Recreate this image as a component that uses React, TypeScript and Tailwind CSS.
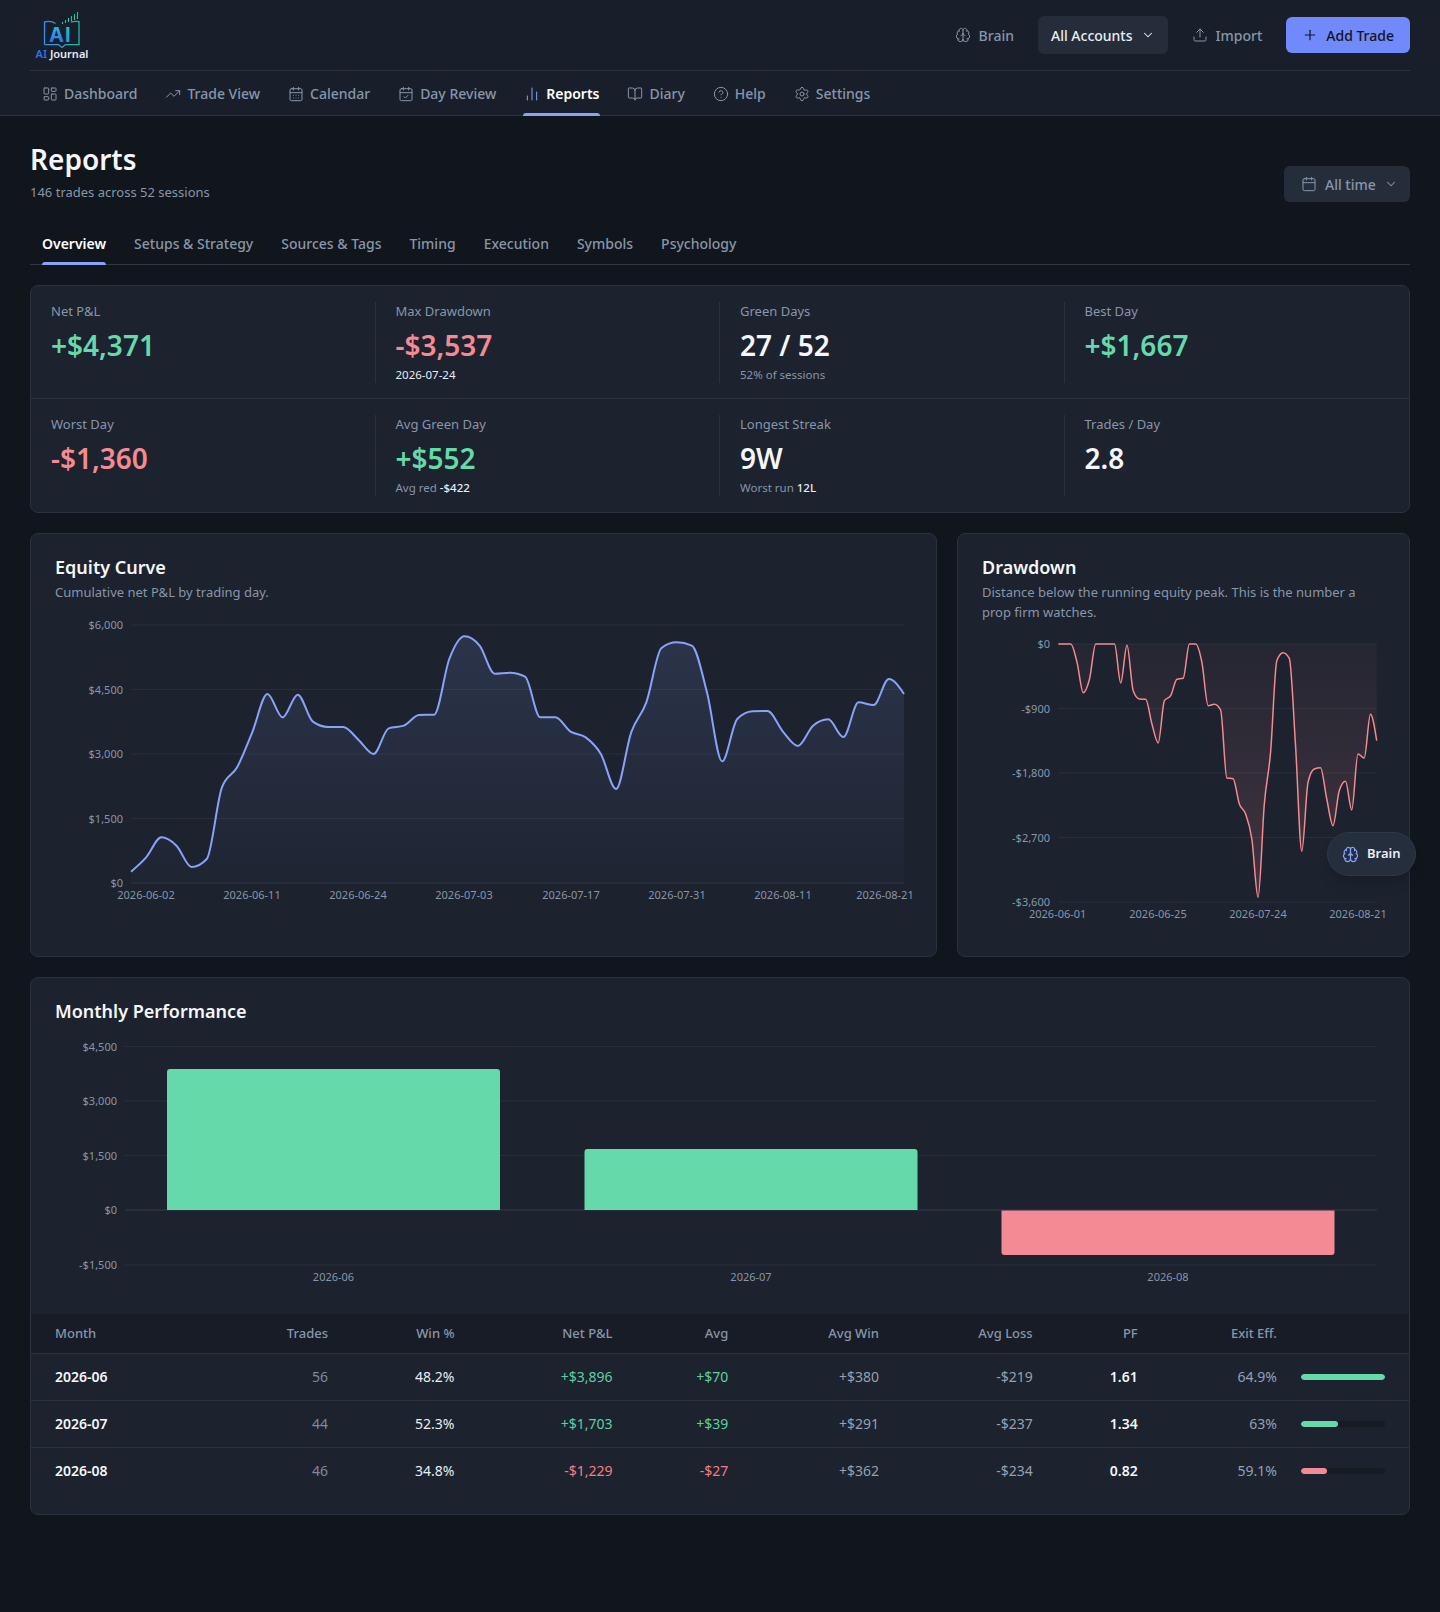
import React from "react";
import {
  LayoutDashboard, TrendingUp, CalendarDays, CalendarCheck, ChartNoAxesColumn, BookOpen,
  CircleHelp, Settings, Brain, Upload, Plus, ChevronDown, Calendar,
} from "lucide-react";

type P = [number, number];

function monotone(pts: P[]): string {
  const n = pts.length;
  const sign = (v: number) => (v < 0 ? -1 : 1);
  const t: number[] = new Array(n).fill(0);
  for (let i = 1; i < n - 1; i++) {
    const h0 = pts[i][0] - pts[i - 1][0];
    const h1 = pts[i + 1][0] - pts[i][0];
    const s0 = (pts[i][1] - pts[i - 1][1]) / h0;
    const s1 = (pts[i + 1][1] - pts[i][1]) / h1;
    const p = (s0 * h1 + s1 * h0) / (h0 + h1);
    t[i] = (sign(s0) + sign(s1)) * Math.min(Math.abs(s0), Math.abs(s1), 0.5 * Math.abs(p)) || 0;
  }
  const ends = (a: number, b: number) => {
    const h = pts[b][0] - pts[a][0];
    return (pts[b][1] - pts[a][1]) / h;
  };
  t[0] = (3 * ends(0, 1) - t[1]) / 2;
  t[n - 1] = (3 * ends(n - 2, n - 1) - t[n - 2]) / 2;
  let d = `M${pts[0][0]},${pts[0][1]}`;
  for (let i = 0; i < n - 1; i++) {
    const h = (pts[i + 1][0] - pts[i][0]) / 3;
    d += `C${pts[i][0] + h},${pts[i][1] + h * t[i]},${pts[i + 1][0] - h},${pts[i + 1][1] - h * t[i + 1]},${pts[i + 1][0]},${pts[i + 1][1]}`;
  }
  return d;
}

const eqY = [1028,985,925,950,1014,990,775,715,610,495,565,497,578,594,594,632,675,598,590,558,557,390,322,350,434,431,443,565,565,608,625,675,780,610,520,357,340,350,490,697,570,547,546,607,651,590,571,624,520,528,450,495];
const ddY = [345,345,345,400,491,450,345,345,345,345,462,349,485,510,511,585,642,515,500,451,448,345,345,400,530,526,543,747,749,825,855,930,1105,825,670,395,371,388,650,967,760,720,716,810,890,785,757,843,675,687,556,635];

const nav = [
  { label: "Dashboard", Icon: LayoutDashboard },
  { label: "Trade View", Icon: TrendingUp },
  { label: "Calendar", Icon: CalendarDays },
  { label: "Day Review", Icon: CalendarCheck },
  { label: "Reports", Icon: ChartNoAxesColumn, active: true },
  { label: "Diary", Icon: BookOpen },
  { label: "Help", Icon: CircleHelp },
  { label: "Settings", Icon: Settings },
];
const tabs = ["Overview", "Setups & Strategy", "Sources & Tags", "Timing", "Execution", "Symbols", "Psychology"];

function Stat({ label, value, tone, sub, last }: { label: string; value: string; tone: string; sub?: React.ReactNode; last?: boolean }) {
  return (
    <div className={last ? "pl-5" : "pl-5 border-r border-[#2a3240]"}>
      <div className="text-[13px] leading-[18px] text-[#8796aa]">{label}</div>
      <div className={`mt-[7px] h-9 text-[28px] leading-9 font-semibold ${tone}`}>{value}</div>
      <div className="mt-1 h-4 text-[11.5px] leading-4 text-[#8796aa]">{sub}</div>
    </div>
  );
}

function Logo() {
  return (
    <div className="flex flex-col items-center w-[56px]">
      <svg width="42" height="38" viewBox="0 0 42 38" className="block">
        <defs>
          <linearGradient id="lg1" x1="0" y1="0" x2="1" y2="0">
            <stop offset="0" stopColor="#2f8ff0" />
            <stop offset="1" stopColor="#17b8a6" />
          </linearGradient>
          <linearGradient id="lg2" x1="0" y1="0" x2="0" y2="1">
            <stop offset="0" stopColor="#22c8e0" />
            <stop offset="1" stopColor="#3b5cf0" />
          </linearGradient>
          <linearGradient id="lg3" x1="0" y1="0" x2="0" y2="1">
            <stop offset="0" stopColor="#1fd0b0" />
            <stop offset="1" stopColor="#1d8ee8" />
          </linearGradient>
        </defs>
        <path d="M3.5 33.5V11c4-1 8-.6 11 1.5M30 11c3-.8 5-.8 8-.4v23H24.5L21 36.500l-3.500-2.900H3.500" fill="none" stroke="url(#lg1)" strokeWidth="1.300" />
        <text x="8" y="31" fontSize="20" fontWeight="700" fill="url(#lg2)" fontFamily="Inter, sans-serif">A</text>
        <text x="24" y="31" fontSize="20" fontWeight="700" fill="url(#lg3)" fontFamily="Inter, sans-serif">I</text>
        <g stroke="#17c9a8" strokeWidth="1.100">
          <path d="M21.500 11v2M24.500 9v3M27.500 7v4M30.500 5v5M33.500 3v6M36.500 1v7" />
        </g>
      </svg>
      <div className="text-[11px] leading-[12px] font-semibold whitespace-nowrap mt-[-1px]">
        <span className="text-[#2f6ff0]">AI</span> <span className="text-[#e6ebf2]">Journal</span>
      </div>
    </div>
  );
}

function EquityChart() {
  const X0 = 55, Y0 = 612;
  const pts: P[] = eqY.map((y, i) => [131 + (i * 773) / 51, 530 + y / 3]);
  const line = monotone(pts);
  const ticks: [string, number][] = [["$6,000", 626], ["$4,500", 690.5], ["$3,000", 755], ["$1,500", 819.500], ["$0", 884]];
  const xt: [string, number][] = [["2026-06-02", 146], ["2026-06-11", 252], ["2026-06-24", 358], ["2026-07-03", 464], ["2026-07-17", 571], ["2026-07-31", 677], ["2026-08-11", 783], ["2026-08-21", 885]];
  return (
    <svg width="857" height="321" viewBox={`${X0} ${Y0} 857 321`} className="block mt-[9px] overflow-visible">
      <defs>
        <linearGradient id="eqFill" x1="0" y1="0" x2="0" y2="1">
          <stop offset="0" stopColor="#8aa2f8" stopOpacity="0.14" />
          <stop offset="1" stopColor="#8aa2f8" stopOpacity="0.02" />
        </linearGradient>
      </defs>
      {ticks.map(([t, y]) => (
        <g key={t}>
          <line x1="131" x2="904" y1={y} y2={y} stroke={t === "$0" ? "#2f3745" : "#282f3c"} />
          <text x="123" y={y + 4} textAnchor="end" fontSize="11" fill="#8796aa">{t}</text>
        </g>
      ))}
      <path d={`${line}L904,884L131,884Z`} fill="url(#eqFill)" />
      <path d={line} fill="none" stroke="#8aa2f8" strokeWidth="2" />
      {xt.map(([t, x]) => (
        <text key={t} x={x} y="900" textAnchor="middle" fontSize="11" fill="#8796aa">{t}</text>
      ))}
    </svg>
  );
}

function DrawdownChart() {
  const X0 = 982, Y0 = 632;
  const pts: P[] = ddY.map((y, i) => [1058.3 + (i * 318.4) / 51, 530 + y / 3]);
  const line = monotone(pts);
  const ticks: [string, number][] = [["$0", 645], ["-$900", 709.5], ["-$1,800", 774], ["-$2,700", 838.5], ["-$3,600", 903]];
  const xt: [string, number][] = [["2026-06-01", 1057.7], ["2026-06-25", 1158], ["2026-07-24", 1258], ["2026-08-21", 1358]];
  return (
    <svg width="403" height="301" viewBox={`${X0} ${Y0} 403 301`} className="block mt-[9px] overflow-visible">
      <defs>
        <linearGradient id="ddFill" x1="0" y1="0" x2="0" y2="1">
          <stop offset="0" stopColor="#f58a92" stopOpacity="0.04" />
          <stop offset="1" stopColor="#f58a92" stopOpacity="0.17" />
        </linearGradient>
      </defs>
      {ticks.map(([t, y]) => (
        <g key={t}>
          <line x1="1058.3" x2="1376.7" y1={y} y2={y} stroke="#282f3c" />
          <text x="1050" y={y + 4} textAnchor="end" fontSize="11" fill="#8796aa">{t}</text>
        </g>
      ))}
      <path d={`${line}L1376.7,645L1058.3,645Z`} fill="url(#ddFill)" />
      <path d={line} fill="none" stroke="#f58a92" strokeWidth="1.500" />
      {xt.map(([t, x]) => (
        <text key={t} x={x} y="919" textAnchor="middle" fontSize="11" fill="#8796aa">{t}</text>
      ))}
    </svg>
  );
}

function MonthlyChart() {
  const X0 = 55, Y0 = 1030;
  const ticks: [string, number][] = [["$4,500", 1046.5], ["$3,000", 1101], ["$1,500", 1155.5], ["$0", 1210], ["-$1,500", 1265]];
  const r = 3;
  return (
    <svg width="1330" height="265" viewBox={`${X0} ${Y0} 1330 265`} className="block mt-[6px] ml-6">
      {ticks.map(([t, y]) => (
        <g key={t}>
          <line x1="125" x2="1377" y1={y} y2={y} stroke={t === "$0" ? "#343c4b" : "#282f3c"} />
          <text x="117" y={y + 4} textAnchor="end" fontSize="11" fill="#8796aa">{t}</text>
        </g>
      ))}
      <path d={`M167,1210V${1069 + r}a${r},${r} 0 0 1 ${r},-${r}H${500 - r}a${r},${r} 0 0 1 ${r},${r}V1210Z`} fill="#66d9ab" />
      <path d={`M584.500,1210V${1149 + r}a${r},${r} 0 0 1 ${r},-${r}H${917.5 - r}a${r},${r} 0 0 1 ${r},${r}V1210Z`} fill="#66d9ab" />
      <path d={`M1001.500,1210.500V${1255 - r}a${r},${r} 0 0 0 ${r},${r}H${1334.5 - r}a${r},${r} 0 0 0 ${r},-${r}V1210.500Z`} fill="#f48a94" />
      {[["2026-06", 333.5], ["2026-07", 751], ["2026-08", 1168]].map(([t, x]) => (
        <text key={t as string} x={x as number} y="1281" textAnchor="middle" fontSize="11" fill="#8796aa">{t}</text>
      ))}
    </svg>
  );
}

const rows = [
  { m: "2026-06", t: "56", w: "48.2%", n: "+$3,896", a: "+$70", aw: "+$380", al: "-$219", pf: "1.61", e: "64.9%", bar: 100, pos: true },
  { m: "2026-07", t: "44", w: "52.3%", n: "+$1,703", a: "+$39", aw: "+$291", al: "-$237", pf: "1.34", e: "63%", bar: 44, pos: true },
  { m: "2026-08", t: "46", w: "34.8%", n: "-$1,229", a: "-$27", aw: "+$362", al: "-$234", pf: "0.82", e: "59.1%", bar: 31, pos: false },
];

export default function App() {
  return (
    <div className="relative min-h-[1612px] bg-[#11151c] text-[#e8edf4] [font-family:'Noto_Sans',sans-serif]">
      <header className="bg-[#181f2a] border-b border-[#2a3240] px-[30px] h-[116px]">
        <div className="h-[71px] border-b border-[#2a3240] flex items-center justify-between">
          <div className="pl-1 pt-[1px]"><Logo /></div>
          <div className="flex items-center gap-2">
            <button className="flex items-center gap-2 px-4 h-9 whitespace-nowrap text-[14px] font-medium text-[#8796aa]">
              <Brain size={16} strokeWidth={1.5} />Brain
            </button>
            <button className="flex items-center gap-2 px-[13px] h-[38px] whitespace-nowrap rounded-md bg-[#252d3b] text-[14px] font-medium text-[#e8edf4]">
              All Accounts<ChevronDown size={14} strokeWidth={1.75} />
            </button>
            <button className="flex items-center gap-2 px-4 h-9 whitespace-nowrap text-[14px] font-medium text-[#8796aa]">
              <Upload size={16} strokeWidth={1.5} />Import
            </button>
            <button className="flex items-center gap-2 px-4 h-9 whitespace-nowrap rounded-md bg-[#7089fb] text-[14px] font-medium text-[#10151d]">
              <Plus size={16} strokeWidth={1.75} />Add Trade
            </button>
          </div>
        </div>
        <nav className="flex gap-[26px] pl-[11px] h-[45px]">
          {nav.map(({ label, Icon, active }) => (
            <a key={label} className={`relative flex items-center gap-[6px] px-[1px] text-[14px] font-medium ${active ? "text-white font-semibold" : "text-[#8796aa]"}`}>
              <Icon size={16} strokeWidth={1.5} className={active ? "text-[#8aa2f8]" : ""} />
              {label}
              {active ? <span className="absolute inset-x-0 bottom-0 h-[3px] rounded-t-sm bg-[#8aa2f8]" /> : null}
            </a>
          ))}
        </nav>
      </header>

      <main className="px-[30px]">
        <div className="flex items-end justify-between pt-[25px]">
          <div>
            <h1 className="text-[28px] leading-9 font-semibold text-[#f4f6fa]">Reports</h1>
            <p className="mt-[5px] text-[13px] leading-5 text-[#8796aa]">146 trades across 52 sessions</p>
          </div>
          <button className="flex items-center gap-2 h-9 w-[126px] pl-[17px] whitespace-nowrap rounded-md bg-[#252d3b] text-[14px] font-medium text-[#8796aa]">
            <Calendar size={16} strokeWidth={1.5} />All time<ChevronDown size={14} strokeWidth={1.75} />
          </button>
        </div>

        <div className="mt-5 flex gap-7 pl-3 border-b border-[#2f3745] h-[43px]">
          {tabs.map((t, i) => (
            <a key={t} className={`relative pt-3 text-[14px] leading-5 font-medium ${i === 0 ? "text-white font-semibold" : "text-[#8796aa]"}`}>
              {t}
              {i === 0 ? <span className="absolute inset-x-0 -bottom-px h-[3px] rounded-t-sm bg-[#8aa2f8]" /> : null}
            </a>
          ))}
        </div>

        <section className="mt-5 rounded-lg border border-[#2a3240] bg-[#1c222e]">
          <div className="grid grid-cols-4 pt-4 pb-[15px] border-b border-[#2a3240]">
            <Stat label="Net P&L" value="+$4,371" tone="text-[#66d9ab]" />
            <Stat label="Max Drawdown" value="-$3,537" tone="text-[#f58a92]" sub={<span className="text-[#e8edf4]">2026-07-24</span>} />
            <Stat label="Green Days" value="27 / 52" tone="text-[#f4f6fa]" sub="52% of sessions" />
            <Stat label="Best Day" value="+$1,667" tone="text-[#66d9ab]" last />
          </div>
          <div className="grid grid-cols-4 pt-4 pb-4">
            <Stat label="Worst Day" value="-$1,360" tone="text-[#f58a92]" />
            <Stat label="Avg Green Day" value="+$552" tone="text-[#66d9ab]" sub={<>Avg red <span className="text-[#e8edf4] font-medium">-$422</span></>} />
            <Stat label="Longest Streak" value="9W" tone="text-[#f4f6fa]" sub={<>Worst run <span className="text-[#e8edf4] font-medium">12L</span></>} />
            <Stat label="Trades / Day" value="2.8" tone="text-[#f4f6fa]" last />
          </div>
        </section>

        <section className="mt-5 grid grid-cols-[2fr_1fr] gap-5">
          <div className="rounded-lg border border-[#2a3240] bg-[#1c222e] pt-5 px-6">
            <h2 className="text-[18px] leading-[26px] font-semibold text-[#f4f6fa]">Equity Curve</h2>
            <p className="mt-[2px] text-[13px] leading-5 text-[#8796aa]">Cumulative net P&amp;L by trading day.</p>
            <EquityChart />
          </div>
          <div className="rounded-lg border border-[#2a3240] bg-[#1c222e] pt-5 px-6 pb-6">
            <h2 className="text-[18px] leading-[26px] font-semibold text-[#f4f6fa]">Drawdown</h2>
            <p className="mt-[2px] text-[13px] leading-5 text-[#8796aa]">Distance below the running equity peak. This is the number a prop firm watches.</p>
            <DrawdownChart />
          </div>
        </section>

        <section className="mt-5 rounded-lg border border-[#2a3240] bg-[#1c222e] pt-5">
          <h2 className="px-6 text-[18px] leading-[26px] font-semibold text-[#f4f6fa]">Monthly Performance</h2>
          <MonthlyChart />
          <table className="mt-[19px] w-full table-fixed border-collapse mb-5">
            <colgroup>
              <col className="w-[169px]" /><col className="w-[152px]" /><col className="w-[126.5px]" /><col className="w-[158px]" /><col className="w-[115.8px]" /><col className="w-[150.7px]" /><col className="w-[153.7px]" /><col className="w-[105px]" /><col className="w-[139.2px]" /><col />
            </colgroup>
            <thead>
              <tr className="h-[39px] bg-[#171c26] border-b border-[#2a3240] text-[13px] text-[#8796aa]">
                {["Month", "Trades", "Win %", "Net P&L", "Avg", "Avg Win", "Avg Loss", "PF", "Exit Eff."].map((h, i) => (
                  <th key={h} className={`font-medium px-6 whitespace-nowrap ${i === 0 ? "text-left" : "text-right"}`}>{h}</th>
                ))}
                <th />
              </tr>
            </thead>
            <tbody>
              {rows.map((r, i) => (
                <tr key={r.m} className={`h-[47px] text-[14px] ${i < 2 ? "border-b border-[#2a3240]" : ""}`}>
                  <td className="px-6 font-semibold text-[#f4f6fa]">{r.m}</td>
                  <td className="px-6 text-right text-[#7b8a9e]">{r.t}</td>
                  <td className="px-6 text-right text-[#e8edf4]">{r.w}</td>
                  <td className={`px-6 text-right ${r.pos ? "text-[#5bd0a1]" : "text-[#f47c86]"}`}>{r.n}</td>
                  <td className={`px-6 text-right ${r.pos ? "text-[#5bd0a1]" : "text-[#f47c86]"}`}>{r.a}</td>
                  <td className="px-6 text-right text-[#94a1b2]">{r.aw}</td>
                  <td className="px-6 text-right text-[#94a1b2]">{r.al}</td>
                  <td className="px-6 text-right font-semibold text-[#f4f6fa]">{r.pf}</td>
                  <td className="px-6 text-right text-[#94a1b2]">{r.e}</td>
                  <td className="pr-6">
                    <div className="h-[6px] w-[84px] rounded-full bg-[#161b24] overflow-hidden">
                      <div className={`h-full rounded-full ${r.pos ? "bg-[#66d9ab]" : "bg-[#f48a94]"}`} style={{ width: `${r.bar}%` }} />
                    </div>
                  </td>
                </tr>
              ))}
            </tbody>
          </table>
        </section>
      </main>

      <button className="absolute left-[1327px] top-[832px] flex items-center gap-2 h-11 w-[89px] pl-[14px] rounded-full bg-[#252e3d] border border-[#2f3847] shadow-lg text-[13px] font-semibold text-[#e8edf4]">
        <Brain size={17} strokeWidth={1.75} className="text-[#8aa2f8]" />Brain
      </button>
    </div>
  );
}
